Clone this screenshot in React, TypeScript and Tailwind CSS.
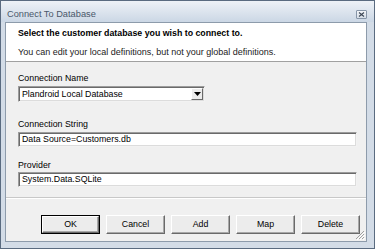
import React from "react";

function Field({ children }: { children?: React.ReactNode }) {
  return (
    <div className="h-[15px] bg-white border border-t-[#9c9c9c] border-l-[#9c9c9c] border-r-[#f2f2f2] border-b-[#f2f2f2] shadow-[inset_1px_1px_0_#6a6a6a,inset_-1px_-1px_0_#dcdcdc] flex items-center pl-[3px] text-[8.8px] leading-[11px] text-black">
      {children}
    </div>
  );
}

function Btn({ label, isDefault }: { label: string; isDefault?: boolean }) {
  return (
    <div
      className={
        "w-[59px] h-[19px] " +
        (isDefault ? "border border-black " : "")
      }
    >
      <div className="w-full h-full bg-[#ececec] border border-t-white border-l-white border-r-[#6a6a6a] border-b-[#6a6a6a] shadow-[inset_-1px_-1px_0_#a8a8a8] flex items-center justify-center text-[8.8px] leading-[11px] text-black">
        {label}
      </div>
    </div>
  );
}

export default function App() {
  return (
    <div className="w-[375px] h-[249px] flex flex-col bg-[#d3dce7] border border-[#5a6b80] overflow-hidden font-['Liberation_Sans',Arial,sans-serif]">
      {/* Title bar */}
      <div className="h-[21px] shrink-0 bg-gradient-to-b from-[#eef2f7] to-[#cbd7e5] flex items-start justify-between pl-[6px] pr-[7px] pt-[8px]">
        <div className="text-[9.25px] leading-[11px] text-[#4a586a]">Connect To Database</div>
        <div className="w-[11px] h-[9px] mt-[1px] border border-[#8796a8] rounded-[1px] bg-gradient-to-b from-[#f4f6f9] to-[#d6dee8] flex items-center justify-center">
          <svg width="7" height="5" viewBox="0 0 7 5">
            <path d="M1 0.5 L6 4.5 M6 0.5 L1 4.5" stroke="#3b4654" strokeWidth="1.1" />
          </svg>
        </div>
      </div>

      {/* Client area */}
      <div className="flex-1 flex flex-col ml-[4px] mr-[7px] mb-[6px] border border-[#8d9bab] bg-[#f0f0f0] relative">
        {/* Header */}
        <div className="h-[39px] shrink-0 bg-white border-b border-b-[#a0a0a0] pl-[12px] pt-[5px] flex flex-col">
          <div className="text-[8.8px] leading-[11px] font-bold text-black">
            Select the customer database you wish to connect to.
          </div>
          <div className="mt-[8px] text-[9px] leading-[11px] text-[#222]">
            You can edit your local definitions, but not your global definitions.
          </div>
        </div>

        {/* Body */}
        <div className="flex-1 flex flex-col pt-[11px]">
          <div className="pl-[12px] pr-[9px] flex flex-col">
            <div className="text-[8.8px] leading-[11px] text-black">Connection Name</div>
            <div className="mt-[2px] w-[187px] h-[16px] bg-white border border-t-[#9c9c9c] border-l-[#9c9c9c] border-r-[#f2f2f2] border-b-[#f2f2f2] shadow-[inset_1px_1px_0_#6a6a6a,inset_-1px_-1px_0_#dcdcdc] flex items-center">
              <div className="flex-1 pl-[3px] text-[8.8px] leading-[11px] text-black">Plandroid Local Database</div>
              <div className="w-[12px] h-[12px] mr-[1px] bg-[#ececec] border border-t-white border-l-white border-r-[#6a6a6a] border-b-[#6a6a6a] flex items-center justify-center">
                <svg width="7" height="4" viewBox="0 0 7 4">
                  <path d="M0 0 H7 L3.5 4 Z" fill="#000" />
                </svg>
              </div>
            </div>

            <div className="mt-[17px] text-[8.8px] leading-[11px] text-black">Connection String</div>
            <div className="mt-[2px]">
              <Field>Data Source=Customers.db</Field>
            </div>

            <div className="mt-[13px] text-[8.8px] leading-[11px] text-black">Provider</div>
            <div className="mt-[1px]">
              <Field>System.Data.SQLite</Field>
            </div>
          </div>

          <div className="mt-[10px] h-[2px] border-t border-t-[#c8c8c8] border-b border-b-white" />

          <div className="mt-[16px] pl-[35px] flex gap-[6px]">
            <Btn label="OK" isDefault />
            <Btn label="Cancel" />
            <Btn label="Add" />
            <Btn label="Map" />
            <Btn label="Delete" />
          </div>
        </div>

        {/* resize grip */}
        <svg className="absolute right-[1px] bottom-[1px]" width="11" height="11" viewBox="0 0 11 11">
          <path d="M10 2 L2 10 M10 5 L5 10 M10 8 L8 10" stroke="#a0a0a0" strokeWidth="1" />
          <path d="M11 3 L3 11 M11 6 L6 11 M11 9 L9 11" stroke="#ffffff" strokeWidth="1" />
        </svg>
      </div>
    </div>
  );
}
